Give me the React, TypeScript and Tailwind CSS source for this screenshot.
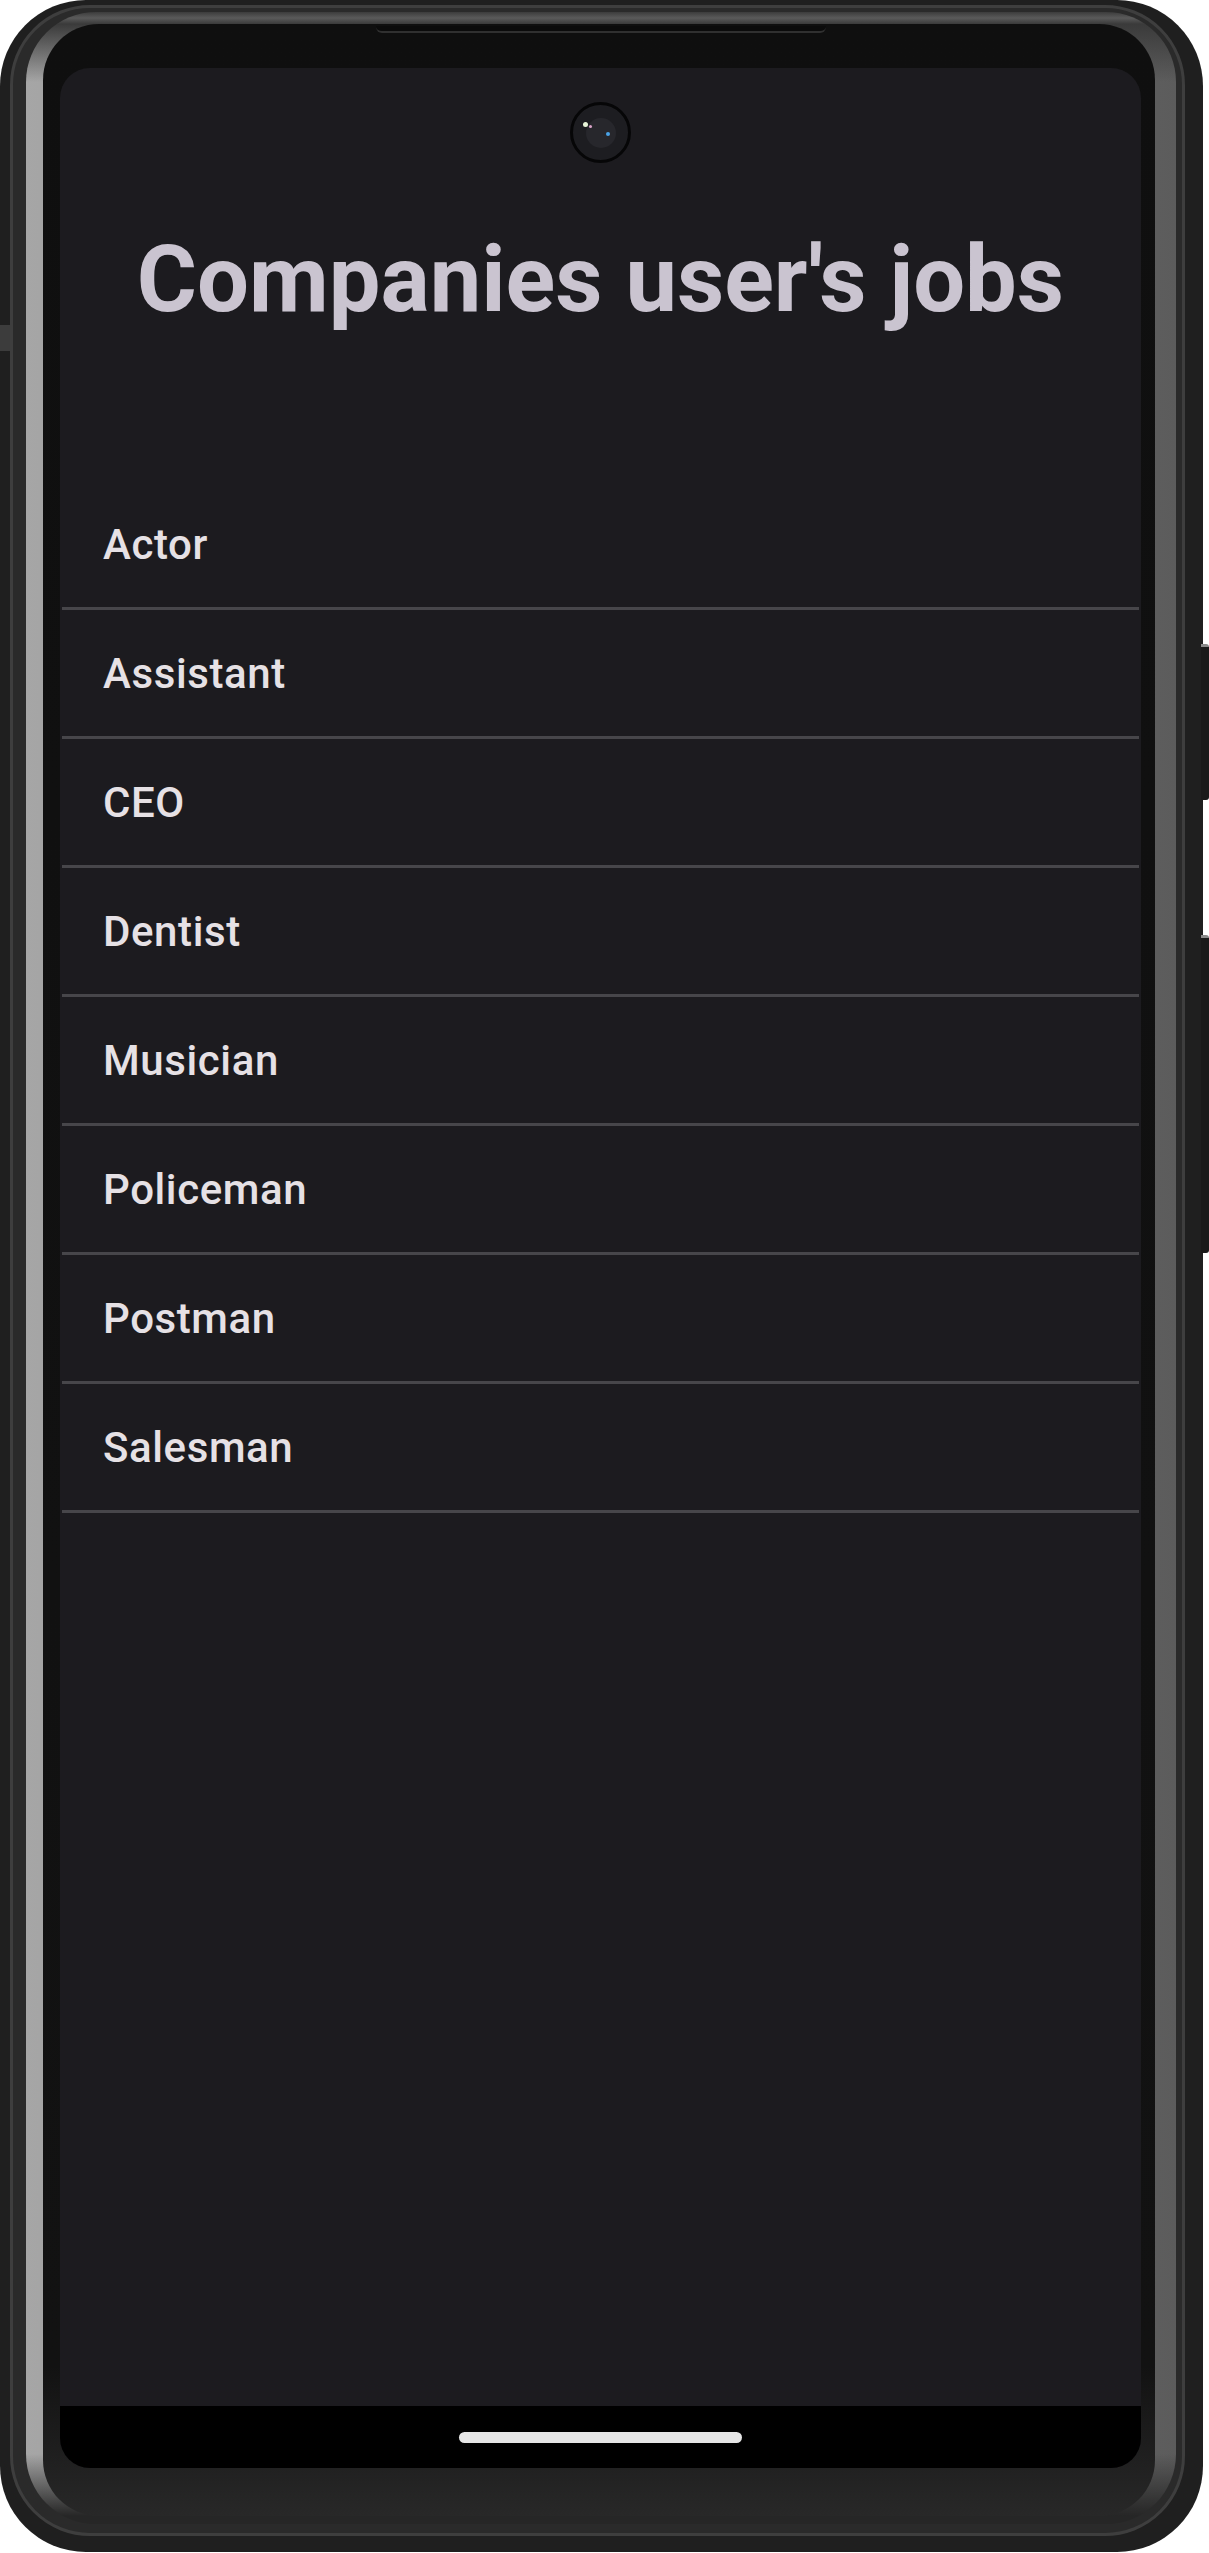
import React from "react";

const jobs = ["Actor", "Assistant", "CEO", "Dentist", "Musician", "Policeman", "Postman", "Salesman"];

function Camera() {
  return (
    <div className="absolute left-[510px] top-[34px] w-[61px] h-[61px] rounded-full border-[3px] border-[#060607] bg-[#1d1d21] flex items-center justify-center">
      <div className="relative w-[30px] h-[30px] rounded-full bg-[#27272c]">
        <div className="absolute left-[-3px] top-[4px] w-[5px] h-[5px] rounded-full bg-[#e8f5d8]" />
        <div className="absolute left-[3px] top-[7px] w-[3px] h-[3px] rounded-full bg-[#d9a3c8]" />
        <div className="absolute left-[20px] top-[14px] w-[4px] h-[4px] rounded-full bg-[#4aa3e8]" />
      </div>
    </div>
  );
}

export default function App() {
  return (
    <div className="relative w-[1209px] h-[2553px] bg-white [font-family:Roboto,'Noto_Sans',sans-serif]">
      {/* phone shell */}
      <div className="w-[1203px] h-[2552px] rounded-[86px] bg-[#1f1f1f] pl-[10px] pr-[18px] pt-[5px] pb-[16px] flex">
        <div className="flex-1 flex rounded-[80px] border-[3px] border-[#3e3e3e] bg-[#2a2a2a] pl-[13px] pr-[6px] pt-[4px] pb-[9px]">
          <div className="flex-1 flex rounded-[70px] bg-[linear-gradient(to_bottom,#3c3c3c_0px,#5a5a5a_6px,#3a3a3a_12px,transparent_70px,transparent_calc(100%-70px),#262626_calc(100%-8px)),linear-gradient(to_right,#a6a6a6,#7c7c7c_50%,#5c5c5c)] pl-[17px] pr-[21px] pt-[12px] pb-[8px]">
            <div className="flex-1 flex flex-col rounded-[56px] bg-[linear-gradient(to_bottom,#0f0f0f_0%,#121212_94%,#282828_100%)] pl-[17px] pr-[14px] pb-[48px]">
              <div className="h-[44px] flex justify-center">
                <div className="mt-[2px] w-[450px] h-[7px] rounded-b-[6px] bg-[#0b0b0b] border-b-[2px] border-[#303030]" />
              </div>
              <div className="relative w-[1081px] h-[2400px] rounded-[30px] overflow-hidden bg-[#1c1b1f] flex flex-col">
                <Camera />
                <h1 className="mt-[166px] text-center text-[92px] leading-none font-bold text-[#cac4d0]">
                  Companies user's jobs
                </h1>
                <ul className="mt-[155px] flex flex-col">
                  {jobs.map((j) => (
                    <li key={j} className="flex flex-col">
                      <div className="h-[126px] flex items-center pl-[43px] text-[42px] font-medium tracking-[0.6px] text-[#e6e1e5]">
                        {j}
                      </div>
                      <div className="mx-[2px] h-[3px] bg-[#47464a]" />
                    </li>
                  ))}
                </ul>
                <div className="mt-auto h-[62px] bg-black flex items-center justify-center">
                  <div className="w-[283px] h-[11px] rounded-full bg-[#e6e6e6]" />
                </div>
              </div>
            </div>
          </div>
        </div>
      </div>
      {/* side buttons */}
      <div className="absolute left-[1201px] top-[644px] w-[8px] h-[156px] rounded-r-[3px] bg-[#1a1a1a] border-t-[3px] border-[#8a8a8a]" />
      <div className="absolute left-[1201px] top-[935px] w-[8px] h-[318px] rounded-r-[3px] bg-[#1a1a1a] border-t-[3px] border-[#8a8a8a]" />
      {/* antenna marks */}
      <div className="absolute left-0 top-[325px] w-[10px] h-[26px] bg-[#3c3c3c]" />
    </div>
  );
}
